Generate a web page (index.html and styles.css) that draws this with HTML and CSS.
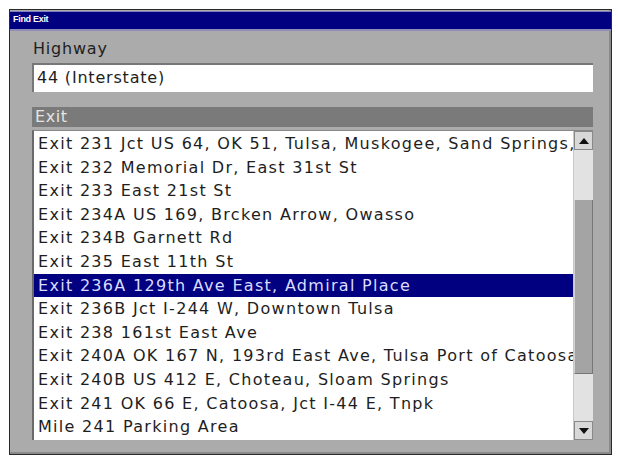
FILE: index.html
```html
<!DOCTYPE html>
<html>
<head>
<meta charset="utf-8">
<link rel="stylesheet" href="styles.css">
</head>
<body>
<div class="window">
  <div class="titlebar">Find Exit</div>
  <div class="content">
    <div class="label">Highway</div>
    <div class="input">44 (Interstate)</div>
    <div class="header">Exit</div>
    <div class="listbox">
      <div class="rows">
        <div class="row">Exit 231 Jct US 64, OK 51, Tulsa, Muskogee, Sand Springs,</div>
        <div class="row">Exit 232 Memorial Dr, East 31st St</div>
        <div class="row">Exit 233 East 21st St</div>
        <div class="row">Exit 234A US 169, Brcken Arrow, Owasso</div>
        <div class="row">Exit 234B Garnett Rd</div>
        <div class="row">Exit 235 East 11th St</div>
        <div class="row selected">Exit 236A 129th Ave East, Admiral Place</div>
        <div class="row">Exit 236B Jct I-244 W, Downtown Tulsa</div>
        <div class="row">Exit 238 161st East Ave</div>
        <div class="row">Exit 240A OK 167 N, 193rd East Ave, Tulsa Port of Catoosa</div>
        <div class="row">Exit 240B US 412 E, Choteau, Sloam Springs</div>
        <div class="row">Exit 241 OK 66 E, Catoosa, Jct I-44 E, Tnpk</div>
        <div class="row">Mile 241 Parking Area</div>
      </div>
      <div class="scrollbar">
        <div class="btn"><svg width="10" height="6" viewBox="0 0 10 6"><path d="M0 6 L5 0 L10 6 Z" fill="#111"/></svg></div>
        <div class="track">
          <div class="thumb"></div>
        </div>
        <div class="btn"><svg width="10" height="6" viewBox="0 0 10 6"><path d="M0 0 L5 6 L10 0 Z" fill="#111"/></svg></div>
      </div>
    </div>
  </div>
</div>
</body>
</html>
```
FILE: styles.css
```css
html, body {
  margin: 0;
  padding: 0;
  background: #ffffff;
}
body {
  padding: 9px 0 0 9px;
  font-family: "DejaVu Sans", Verdana, sans-serif;
}
.window {
  width: 601px;
  height: 444px;
  border: 1px solid #2a2a2a;
  background: #ababab;
  display: flex;
  flex-direction: column;
  box-shadow: inset -2px -2px 0 #8a8a8a;
}
.titlebar {
  height: 17px;
  margin-top: 1px;
  background: #000080;
  border-top: 1px solid #7f7fc0;
  border-bottom: 2px solid #8e8eb8;
  color: #ffffff;
  font-family: "Liberation Sans", Arial, sans-serif;
  font-weight: bold;
  font-size: 9px;
  line-height: 15px;
  padding-left: 3px;
  letter-spacing: -0.3px;
}
.content {
  padding: 7px 18px 0 22px;
  display: flex;
  flex-direction: column;
}
.label {
  font-size: 16px;
  line-height: 22px;
  color: #1e1e1e;
  padding-left: 1px;
  height: 22px;
  letter-spacing: 0.8px;
}
.input {
  margin-top: 3px;
  height: 27px;
  background: #ffffff;
  border-top: 2px solid #777;
  border-left: 2px solid #777;
  font-size: 16px;
  line-height: 26px;
  padding-left: 3px;
  color: #1e1e1e;
  letter-spacing: 0.8px;
}
.header {
  margin-top: 15px;
  height: 20px;
  background: #7a7a7a;
  color: #e4e4e4;
  font-size: 16px;
  line-height: 20px;
  padding-left: 3px;
  letter-spacing: 0.6px;
}
.listbox {
  margin-top: 3px;
  height: 309px;
  display: flex;
  background: #ffffff;
  border-left: 2px solid #6a6a6a;
  border-top: 1px solid #888;
}
.rows {
  flex: 1;
  overflow: hidden;
  padding-top: 1px;
}
.row {
  height: 23.6px;
  line-height: 23.6px;
  font-size: 16px;
  color: #1e1e1e;
  padding-left: 4px;
  white-space: nowrap;
  overflow: hidden;
  letter-spacing: 1.3px;
}
.row.selected {
  background: #000080;
  color: #dcdcff;
}
.scrollbar {
  width: 19px;
  display: flex;
  flex-direction: column;
  background: #e2e2e2;
  border-left: 1px solid #c8c8c8;
}
.btn {
  height: 19px;
  background: #d8d8d8;
  border: 1px solid #888;
  display: flex;
  align-items: center;
  justify-content: center;
  box-sizing: border-box;
}
.track {
  flex: 1;
  padding-top: 50px;
  padding-bottom: 47px;
  display: flex;
  flex-direction: column;
}
.thumb {
  flex: 1;
  background: #a4a4a4;
  border-left: 1px solid #d0d0d0;
  border-right: 1px solid #777;
  border-bottom: 1px solid #777;
}
```
